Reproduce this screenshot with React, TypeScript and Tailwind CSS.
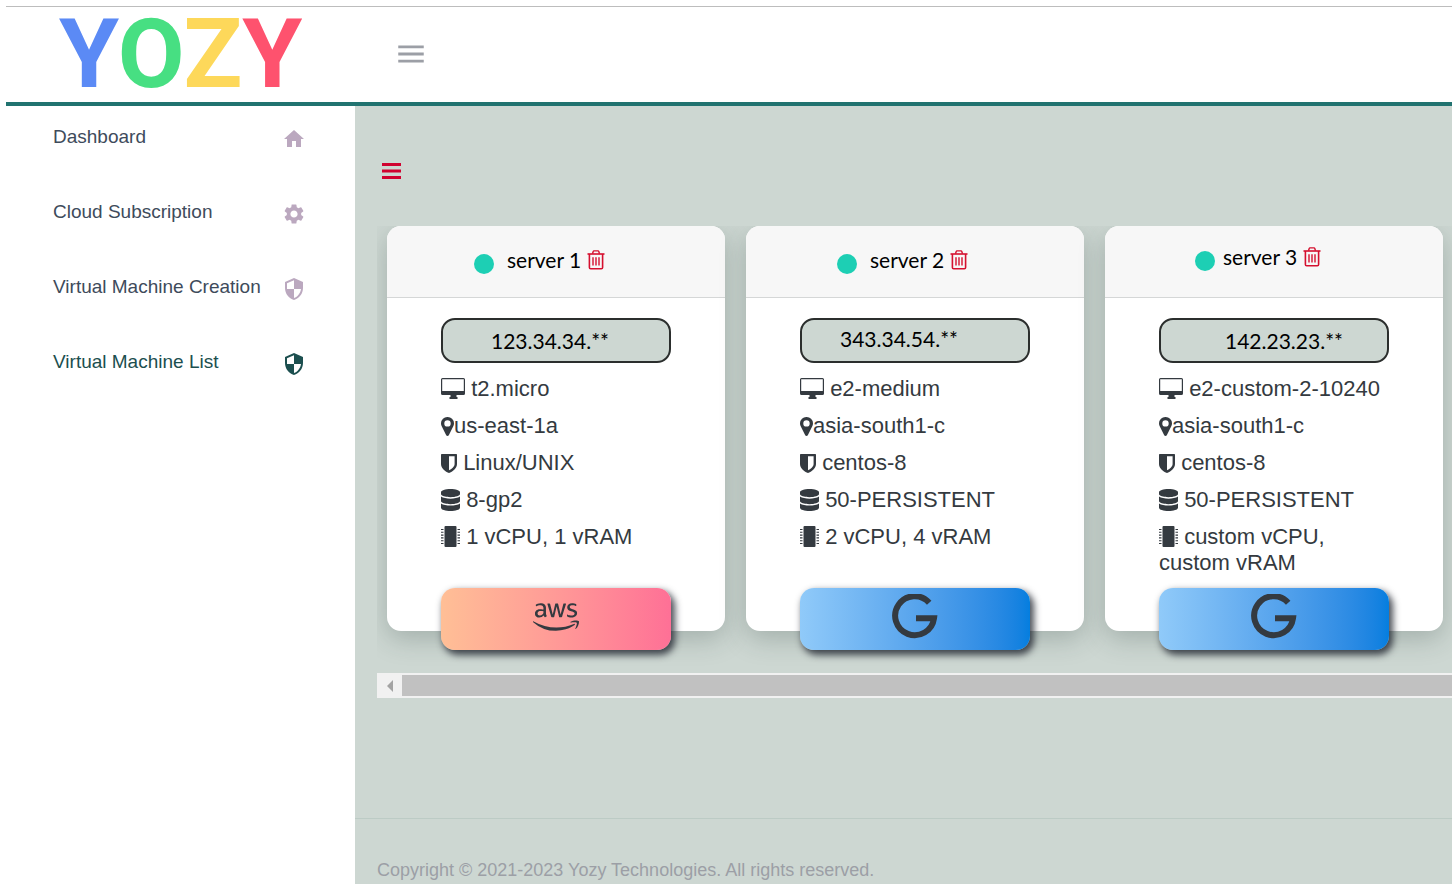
import React from "react";
import { MdHome, MdSettings, MdSecurity, MdMenu } from "react-icons/md";
import { FaAws, FaDatabase } from "react-icons/fa";

type Server = {
  name: string;
  ip: string;
  machine: string;
  zone: string;
  os: string;
  disk: string;
  specs: string;
  provider: "aws" | "google";
  headGap: string;
  ipPad: string;
};

const servers: Server[] = [
  {
    name: "server 1",
    ip: "123.34.34.**",
    machine: "t2.micro",
    zone: "us-east-1a",
    os: "Linux/UNIX",
    disk: "8-gp2",
    specs: "1 vCPU, 1 vRAM",
    provider: "aws",
    headGap: "pb-1 pl-[87px] gap-[13px]",
    ipPad: "pl-12",
  },
  {
    name: "server 2",
    ip: "343.34.54.**",
    machine: "e2-medium",
    zone: "asia-south1-c",
    os: "centos-8",
    disk: "50-PERSISTENT",
    specs: "2 vCPU, 4 vRAM",
    provider: "google",
    headGap: "pb-1 pl-[91px] gap-[13px]",
    ipPad: "pl-[38px] pb-1",
  },
  {
    name: "server 3",
    ip: "142.23.23.**",
    machine: "e2-custom-2-10240",
    zone: "asia-south1-c",
    os: "centos-8",
    disk: "50-PERSISTENT",
    specs: "custom vCPU, custom vRAM",
    provider: "google",
    headGap: "pb-2.5 pl-[90px] gap-2",
    ipPad: "pl-16",
  },
];

const nav = [
  { label: "Dashboard", icon: MdHome, active: false },
  { label: "Cloud Subscription", icon: MdSettings, active: false },
  { label: "Virtual Machine Creation", icon: MdSecurity, active: false },
  { label: "Virtual Machine List", icon: MdSecurity, active: true },
];

const glyph = "inline-block align-[-3px]";

function MonitorIcon() {
  return (
    <svg className={glyph} width="24" height="21" viewBox="0 0 24 21" fill="currentColor" aria-hidden="true">
      <path
        fillRule="evenodd"
        d="M1.500 0h21A1.500 1.500 0 0 1 24 1.500v14a1.500 1.500 0 0 1-1.500 1.500H15.500v2h1v2h-8v-2h1v-2h-8A1.500 1.500 0 0 1 0 15.500v-14A1.500 1.500 0 0 1 1.500 0zM1.200 1.200v11.800h21.600V1.200z"
      />
    </svg>
  );
}

function PinIcon() {
  return (
    <svg className={glyph} width="13" height="19" viewBox="0 0 13 19" fill="currentColor" aria-hidden="true">
      <path
        fillRule="evenodd"
        d="M6.500 0A6.400 6.400 0 0 1 13 6.300c0 1-.2 1.900-.6 2.700L7.800 18.200c-.5 1-2.100 1-2.600 0L.6 9A6.400 6.400 0 0 1 0 6.300 6.400 6.400 0 0 1 6.500 0zm0 3.200a3.200 3.200 0 1 0 0 6.400 3.200 3.200 0 0 0 0-6.400z"
      />
    </svg>
  );
}

function ShieldIcon() {
  return (
    <svg className={glyph} width="16" height="19" viewBox="0 0 16 19" fill="currentColor" aria-hidden="true">
      <path
        fillRule="evenodd"
        d="M.7 0h14.600c.4 0 .7.300.7.700V10c0 4.200-4.200 7.400-7.400 8.800a1.400 1.400 0 0 1-1.200 0C4.200 17.400 0 14.200 0 10V.7C0 .3.300 0 .7 0zM8 2.300v14c2.600-1.300 5.600-3.600 5.600-6.300V2.300z"
      />
    </svg>
  );
}

function ChipIcon() {
  return (
    <svg className={glyph} width="19" height="21" viewBox="0 0 19 21" fill="currentColor" aria-hidden="true">
      <rect x="3.500" width="12" height="21" rx="1" />
      <path
        d="M0 3.500h2.500M0 6.300h2.500M0 9.100h2.500M0 11.900h2.500M0 14.700h2.500M0 17.500h2.500M16.500 3.500h2.500M16.500 6.300h2.500M16.500 9.100h2.500M16.500 11.900h2.500M16.500 14.700h2.500M16.500 17.500h2.500"
        stroke="currentColor"
        strokeWidth="1.100"
      />
    </svg>
  );
}

function TrashIcon() {
  return (
    <svg width="18" height="20" viewBox="0 0 18 20" fill="none" stroke="currentColor" aria-hidden="true">
      <path d="M.5 4h17" strokeWidth="1.600" />
      <path d="M5.500 3.700 6.200 1.500a1 1 0 0 1 .8-.6h4a1 1 0 0 1 .8.600l.7 2.200" strokeWidth="1.400" />
      <path d="M2.400 4v13.500c0 .8.500 1.300 1.300 1.300h10.600c.8 0 1.300-.5 1.300-1.300V4" strokeWidth="1.600" />
      <path d="M6 7.200v8.300M9 7.200v8.300M12 7.200v8.300" strokeWidth="1.400" />
    </svg>
  );
}

function GoogleIcon() {
  return (
    <svg width="46" height="46" viewBox="0 0 46 46" fill="none" stroke="currentColor" strokeWidth="6" aria-hidden="true">
      <path d="M37.200 8.700A19.500 19.500 0 1 0 42 24.300H24" />
    </svg>
  );
}

function ServerCard({ server }: { server: Server }) {
  const aws = server.provider === "aws";
  return (
    <article className="flex w-[338px] shrink-0 flex-col rounded-[14px] bg-white text-[#343a40] shadow-[0_8px_26px_rgba(40,60,55,0.25)]">
      <header
        className={`flex h-[72px] items-center rounded-t-[14px] border-b border-[#d5d7d7] bg-[#f7f7f7] ${server.headGap}`}
      >
        <span className="mt-2 size-5 rounded-full bg-[#1dcfb4]" />
        <h2 className="flex items-center gap-1.5 font-[Lato,sans-serif] text-[21px] text-black">
          {server.name}
          <button type="button" aria-label={`Delete ${server.name}`} className="text-[#d5102f]">
            <TrashIcon />
          </button>
        </h2>
      </header>
      <div className="px-[54px] pt-5">
        <div
          className={`flex h-[45px] items-center rounded-[14px] border-2 border-[#2b2e2d] bg-[#cdd7d2] font-[Lato,sans-serif] text-[21px] text-black ${server.ipPad}`}
        >
          {server.ip}
        </div>
        <ul className="flex h-[212px] flex-col gap-[11px] pt-[13px] text-[22px] leading-[26px]">
          <li><MonitorIcon /> {server.machine}</li>
          <li><PinIcon />{server.zone}</li>
          <li><ShieldIcon /> {server.os}</li>
          <li><FaDatabase className="inline-block h-[22px] w-[19px] align-[-4px]" preserveAspectRatio="none" /> {server.disk}</li>
          <li><ChipIcon /> {server.specs}</li>
        </ul>
        <button
          type="button"
          aria-label={aws ? "Amazon Web Services" : "Google Cloud"}
          className={`mt-[13px] -mb-[19px] flex h-[62px] w-full items-center justify-center rounded-[14px] bg-linear-to-r pb-1 shadow-[3px_4px_7px_1px_rgba(30,35,45,0.8)] ${
            aws ? "from-[#ffbf96] to-[#fe7096]" : "from-[#90caf9] to-[#047edf]"
          }`}
        >
          {aws ? <FaAws size={46} /> : <GoogleIcon />}
        </button>
      </div>
    </article>
  );
}

export default function App() {
  return (
    <div className="flex min-h-screen flex-col bg-white pt-1.5 pl-1.5 font-['Liberation_Sans',Arial,sans-serif]">
      <header className="flex h-[100px] items-center border-t border-b-4 border-t-[#bdbdbd] border-b-[#217370]">
        <a
          href="#"
          aria-label="YOZY"
          className="w-[349px] shrink-0 pl-[53px] font-[Roboto,sans-serif] text-[97px] leading-[95px] font-bold"
        >
          <span className="text-[#5b8af5]">Y</span>
          <span className="text-[#47df82]">O</span>
          <span className="text-[#fdd85a]">Z</span>
          <span className="text-[#fe526e]">Y</span>
        </a>
        <button type="button" aria-label="Toggle sidebar" className="ml-[39px] pb-0.5 text-[#9c9fa6]">
          <MdMenu size={34} />
        </button>
      </header>

      <div className="flex flex-1">
        <nav aria-label="Main" className="w-[349px] shrink-0 pt-1">
          <ul className="flex flex-col gap-[21px]">
            {nav.map(({ label, icon: Icon, active }) => (
              <li key={label}>
                <a
                  href="#"
                  className={`flex h-[54px] items-center justify-between pr-[49px] pl-[47px] text-[19px] ${
                    active ? "text-[#1c4f4f]" : "text-[#3e4b5b]"
                  }`}
                >
                  {label}
                  <Icon size={24} className={active ? "mt-[3px]" : "mt-[3px] text-[#bba8bf]"} />
                </a>
              </li>
            ))}
          </ul>
        </nav>

        <main className="flex min-w-0 flex-1 flex-col bg-[#cdd7d2]">
          <div className="flex flex-1 flex-col pt-[54px] pl-[22px]">
            <button type="button" aria-label="List options" className="ml-[5px] h-[22px] w-5 text-[#d0022f]">
              <svg width="20" height="18" viewBox="0 0 20 18" fill="currentColor" aria-hidden="true">
                <path d="M0 1h19v3H0zM0 7.500h19v3H0zM0 14h19v3H0z" />
              </svg>
            </button>
            <section
              aria-label="Servers"
              className="mt-11 flex h-[447px] items-start gap-[21px] overflow-hidden px-2.5"
            >
              {servers.map((server) => (
                <ServerCard key={server.name} server={server} />
              ))}
            </section>
            <div className="flex h-[25px] bg-[#f1f1f1] py-0.5">
              <button type="button" aria-label="Scroll left" className="flex w-[25px] items-center justify-center text-[#a3a3a3]">
                <svg width="6" height="12" viewBox="0 0 6 12" fill="currentColor" aria-hidden="true">
                  <path d="M6 0v12L0 6z" />
                </svg>
              </button>
              <div className="flex-1 bg-[#c1c1c1]" />
            </div>
          </div>
          <footer className="h-[66px] border-t border-[#bccbc5] pt-[39px] pl-[22px] text-[18px] leading-6 text-[#9c9fa6]">
            Copyright © 2021-2023 Yozy Technologies. All rights reserved.
          </footer>
        </main>
      </div>
    </div>
  );
}
